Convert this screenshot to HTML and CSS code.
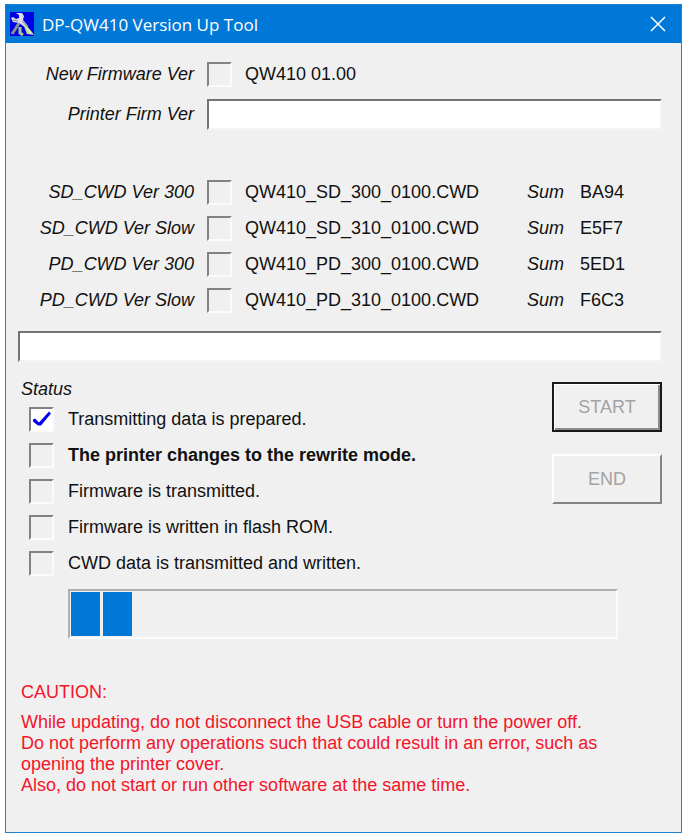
FILE: index.html
```
<!DOCTYPE html>
<html lang="en">
<head>
    <meta charset="UTF-8">
    <meta name="viewport" content="width=device-width, initial-scale=1.0">
    <title>DP-QW410 Version Up Tool</title>
    <link rel="stylesheet" href="styles.css">
</head>
<body>
    <div class="window">
        <header class="title-bar">
            <svg class="app-icon" viewBox="0 0 24 24" aria-hidden="true">
                <rect width="24" height="24" fill="#0000e6"/>
                <path d="M9 11 L6 16 L2 22" stroke="#86968c" stroke-width="3" fill="none"/>
                <path d="M10 15 L10 21 L13 23" stroke="#a9c98c" stroke-width="3" fill="none"/>
                <path d="M6 1 L12 1 L14 4 L13 8 L18 14 L16 16 L9 11 L3 10 L1 6 L3 5 L6 7 L9 6 L9 3 Z" fill="#dcdce4"/>
                <path d="M13 11 L17 14 L22 20 L24 23 L17 22 L15 17 Z" fill="#c3dc96"/>
                <path d="M3 8 L8 9 M12 9 L17 14" stroke="#8484a8" stroke-width="1" fill="none"/>
                <path d="M17 16 L21 21" stroke="#eef4d8" stroke-width="1" fill="none"/>
            </svg>
            <h1 class="title">DP-QW410 Version Up Tool</h1>
            <button class="close" type="button" aria-label="Close">
                <svg width="16" height="16" viewBox="0 0 16 16" aria-hidden="true">
                    <path d="M1 1 L15 15 M15 1 L1 15" stroke="#fff" stroke-width="1.5" fill="none"/>
                </svg>
            </button>
        </header>

        <form class="content">
            <div class="versions">
                <label class="name" for="newFirm">New Firmware Ver</label>
                <input class="check" type="checkbox" id="newFirm" disabled>
                <span>QW410 01.00</span>
            </div>
            <div class="versions printer">
                <label class="name" for="printerFirm">Printer Firm Ver</label>
                <input class="field" type="text" id="printerFirm" readonly>
            </div>

            <div class="versions cwd">
                <label class="name" for="sd300">SD_CWD Ver 300</label>
                <input class="check" type="checkbox" id="sd300" disabled>
                <span>QW410_SD_300_0100.CWD</span>
                <em>Sum</em>
                <span>BA94</span>

                <label class="name" for="sdSlow">SD_CWD Ver Slow</label>
                <input class="check" type="checkbox" id="sdSlow" disabled>
                <span>QW410_SD_310_0100.CWD</span>
                <em>Sum</em>
                <span>E5F7</span>

                <label class="name" for="pd300">PD_CWD Ver 300</label>
                <input class="check" type="checkbox" id="pd300" disabled>
                <span>QW410_PD_300_0100.CWD</span>
                <em>Sum</em>
                <span>5ED1</span>

                <label class="name" for="pdSlow">PD_CWD Ver Slow</label>
                <input class="check" type="checkbox" id="pdSlow" disabled>
                <span>QW410_PD_310_0100.CWD</span>
                <em>Sum</em>
                <span>F6C3</span>
            </div>

            <input class="field message" type="text" aria-label="Message" readonly>

            <div class="lower">
                <section class="status">
                    <h2 class="status-title">Status</h2>
                    <label class="step"><input class="check" type="checkbox" checked disabled>Transmitting data is prepared.</label>
                    <label class="step current"><input class="check" type="checkbox" disabled>The printer changes to the rewrite mode.</label>
                    <label class="step"><input class="check" type="checkbox" disabled>Firmware is transmitted.</label>
                    <label class="step"><input class="check" type="checkbox" disabled>Firmware is written in flash ROM.</label>
                    <label class="step"><input class="check" type="checkbox" disabled>CWD data is transmitted and written.</label>
                </section>
                <div class="buttons">
                    <button class="button default" type="button" disabled>START</button>
                    <button class="button" type="button" disabled>END</button>
                </div>
            </div>

            <progress class="progress" value="2" max="17" aria-label="Update progress"></progress>

            <section class="caution">
                <h2 class="caution-title">CAUTION:</h2>
                <p>While updating, do not disconnect the USB cable or turn the power off.</p>
                <p>Do not perform any operations such that could result in an error, such as opening the printer cover.</p>
                <p>Also, do not start or run other software at the same time.</p>
            </section>
        </form>
    </div>
</body>
</html>
```
FILE: styles.css
```
* {
    box-sizing: border-box;
}
body {
    margin: 0;
    padding: 4px 5px;
    min-height: 100vh;
    display: flex;
    background: #fff;
    color: #111;
    font-family: "Liberation Sans", Arial, sans-serif;
    font-size: 18px;
    line-height: 21px;
}
h1, h2, p {
    margin: 0;
    font-size: inherit;
    font-weight: normal;
}
.window {
    flex: 1;
    background: #f0f0f0;
    border: 1px solid #1f83d2;
}
.title-bar {
    display: flex;
    align-items: center;
    height: 38px;
    padding: 0 15px 0 4px;
    background: #0078d7;
    color: #fff;
}
.app-icon {
    width: 24px;
    height: 24px;
}
.title {
    flex: 1;
    margin-left: 8px;
    font-family: "Open Sans", "Noto Sans", sans-serif;
    font-size: 17px;
}
.close {
    display: flex;
    padding: 0;
    border: none;
    background: none;
}
.content {
    padding: 13px 19px 20px 12px;
}

/* label | box | file | sum | value */
.versions {
    display: grid;
    grid-template-columns: 176px 25px 1fr 40px 82px;
    grid-auto-rows: 36px;
    column-gap: 13px;
    align-items: center;
}
.versions .name {
    text-align: right;
    font-style: italic;
}
.printer {
    margin-top: 4px;
}
.printer .field {
    grid-column: 2 / -1;
}
.cwd {
    margin-top: 42px;
}
.check {
    appearance: none;
    flex: none;
    width: 25px;
    height: 25px;
    margin: 0;
    border: 2px solid;
    border-color: #828282 #fbfbfb #fbfbfb #828282;
    background: #f0f0f0;
}
.check:checked {
    background: #fff;
}
.check:checked::before {
    content: "";
    display: block;
    width: 21px;
    height: 21px;
    background: #0000f0;
    clip-path: polygon(2px 11px, 4px 10px, 8px 14px, 18px 3px, 20px 5px, 10px 17px, 7px 17px, 2px 13px);
}
.field {
    width: 100%;
    height: 31px;
    padding: 0 4px;
    border: 2px solid;
    border-color: #747474 #f4f4f4 #f4f4f4 #747474;
    background: #fff;
    font: inherit;
}
.message {
    display: block;
    margin-top: 13px;
}
.lower {
    display: flex;
    justify-content: space-between;
    margin-top: 17px;
}
.status-title {
    margin-bottom: 1px;
    padding-left: 3px;
    font-style: italic;
}
.step {
    display: flex;
    align-items: center;
    gap: 14px;
    height: 36px;
    padding-left: 11px;
}
.current {
    font-weight: bold;
}
.buttons {
    display: flex;
    flex-direction: column;
    gap: 22px;
    padding-top: 3px;
}
.button {
    width: 110px;
    height: 50px;
    border: 2px solid;
    border-color: #fff #848484 #848484 #fff;
    background: #f0f0f0;
    color: #a3a3a3;
    font: inherit;
}
.default {
    border-color: #1a1a1a;
    box-shadow: inset 1px 1px #fff, inset -2px -2px #8c8c8c;
}
.progress {
    appearance: none;
    display: block;
    width: calc(100% - 94px);
    height: 50px;
    margin: 8px 0 0 50px;
    padding: 1px;
    border: 2px solid;
    border-color: #b0b0b0 #fbfbfb #fbfbfb #b0b0b0;
    background: #f0f0f0;
}
.progress::-webkit-progress-bar {
    background: #f0f0f0;
}
.progress::-webkit-progress-value {
    background: repeating-linear-gradient(to right, #0078d7 0 29px, #f0f0f0 29px 32px);
}
.caution {
    margin-top: 43px;
    padding-left: 3px;
    color: #f5142a;
}
.caution-title {
    margin-bottom: 9px;
}
```
